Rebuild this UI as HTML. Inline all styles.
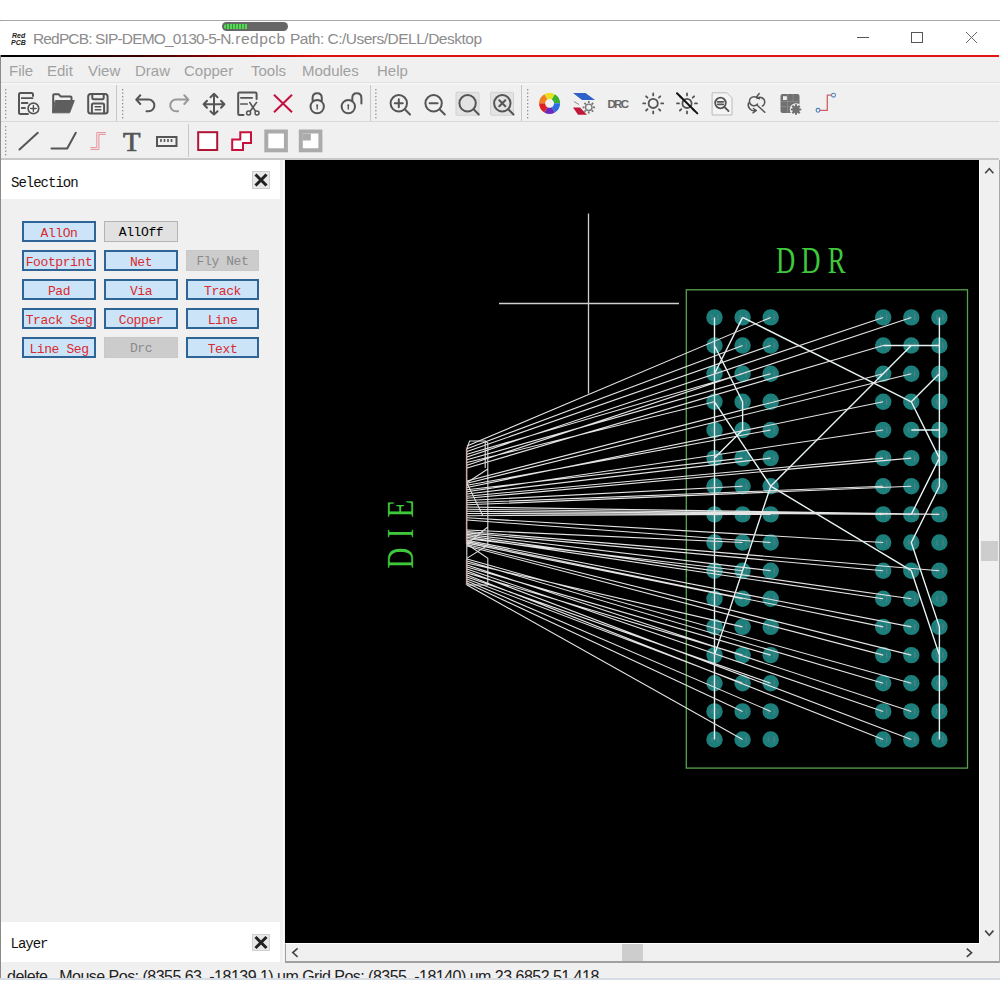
<!DOCTYPE html>
<html><head><meta charset="utf-8">
<style>
*{margin:0;padding:0;box-sizing:border-box}
html,body{width:1000px;height:1000px;overflow:hidden;background:#fff;font-family:"Liberation Sans",sans-serif}
.abs{position:absolute}
#win{position:absolute;left:0;top:20px;width:1000px;height:960px;background:#f0f0f0;border-top:1px solid #a8a8a8;border-left:1px solid #8a8a8a}
#title{position:absolute;left:0;top:21px;width:1000px;height:34px;background:#fff}
#redline{position:absolute;left:1px;top:55px;width:998px;height:2px;background:linear-gradient(to right,#000 0%,#050000 5%,#400000 15%,#a00000 24%,#e01010 32%,#e41414 100%)}
.ttl{position:absolute;left:33px;top:29.5px;font-size:15.5px;color:#8c8c8c;white-space:nowrap;letter-spacing:-0.5px}
.menu{position:absolute;top:62px;font-size:15px;color:#a0a0a0;white-space:nowrap}
.mono{font-family:"Liberation Mono",monospace}
.btn{position:absolute;width:74px;height:21px;border:2px solid #2f6496;background:#cce4f7;color:#da2a30;font-family:"Liberation Mono",monospace;font-size:13px;letter-spacing:-0.4px;text-align:center;line-height:17px;padding-top:1.5px}
.btn.off{border:1px solid #b4b4b4;background:#e1e1e1;color:#000;line-height:19px;padding-top:1px}
.btn.dis{border:1px solid #c8c8c8;background:#cccccc;color:#8a8a8a;line-height:19px;padding-top:1px}
</style></head><body>
<div id="win"></div>
<div id="title"></div>
<div id="redline"></div>
<!-- title -->
<svg class="abs" style="left:11px;top:31px" width="16" height="15" viewBox="0 0 16 15">
<text x="1" y="7" font-family="Liberation Sans" font-weight="bold" font-style="italic" font-size="7" fill="#222">Red</text>
<text x="0" y="14" font-family="Liberation Sans" font-weight="bold" font-style="italic" font-size="7" fill="#222">PCB</text>
</svg>
<div class="ttl" style="letter-spacing:-0.85px">RedPCB: SIP-DEMO_0130-5-N</div><div class="ttl" style="left:230.5px;letter-spacing:0.5px">.redpcb</div><div class="ttl" style="left:290px;letter-spacing:-0.5px">Path: C:/Users/DELL/Desktop</div>
<!-- progress pill -->
<div class="abs" style="left:222px;top:22px;width:66px;height:9px;border-radius:5px;background:#666"></div>
<div class="abs" style="left:224px;top:24px;width:23px;height:5px;border-radius:3px 0 0 3px;background:repeating-linear-gradient(to right,#5ed35e 0 2px,#2f9a2f 2px 3px)"></div>
<!-- window controls -->
<div class="abs" style="left:857px;top:37px;width:12px;height:1px;background:#555"></div>
<div class="abs" style="left:911px;top:32px;width:12px;height:11px;border:1px solid #555"></div>
<svg class="abs" style="left:965px;top:31px" width="13" height="13" viewBox="0 0 13 13"><path d="M1 1L12 12M12 1L1 12" stroke="#666" stroke-width="1"/></svg>
<!-- menu -->
<div class="menu" style="left:9px">File</div>
<div class="menu" style="left:47px">Edit</div>
<div class="menu" style="left:88px">View</div>
<div class="menu" style="left:135px">Draw</div>
<div class="menu" style="left:184px">Copper</div>
<div class="menu" style="left:251px">Tools</div>
<div class="menu" style="left:302px">Modules</div>
<div class="menu" style="left:377px">Help</div>

<!-- toolbars area -->
<!--TB--><svg class="abs" style="left:0;top:80px" width="1000" height="80" viewBox="0 80 1000 80">
<!-- toolbar lines -->
<path d="M1 82.5H1000" stroke="#e2e2e2" stroke-width="1"/><path d="M1 84H1000" stroke="#fafafa" stroke-width="1"/>
<path d="M116.5 85V121M370.5 85V121M521.5 85V121M188.5 124V157" stroke="#c8c8c8" stroke-width="1"/>
<g fill="#8c8c8c">
<rect x="5" y="89" width="1.3" height="1.3"/><rect x="5" y="92.5" width="1.3" height="1.3"/><rect x="5" y="96" width="1.3" height="1.3"/><rect x="5" y="99.5" width="1.3" height="1.3"/><rect x="5" y="103" width="1.3" height="1.3"/><rect x="5" y="106.5" width="1.3" height="1.3"/><rect x="5" y="110" width="1.3" height="1.3"/><rect x="5" y="113.5" width="1.3" height="1.3"/><rect x="5" y="117" width="1.3" height="1.3"/>
</g>

<defs><g id="grip1" fill="#8c8c8c"><rect x="0" y="0" width="1.3" height="1.3"/><rect x="0" y="3.5" width="1.3" height="1.3"/><rect x="0" y="7" width="1.3" height="1.3"/><rect x="0" y="10.5" width="1.3" height="1.3"/><rect x="0" y="14" width="1.3" height="1.3"/><rect x="0" y="17.5" width="1.3" height="1.3"/><rect x="0" y="21" width="1.3" height="1.3"/><rect x="0" y="24.5" width="1.3" height="1.3"/><rect x="0" y="28" width="1.3" height="1.3"/></g></defs>
<use href="#grip1" x="122" y="89"/>
<use href="#grip1" x="375.2" y="89"/>
<use href="#grip1" x="527" y="89"/>
<use href="#grip1" x="5" y="126"/>

<g fill="none" stroke="#555" stroke-width="2" stroke-linecap="round" stroke-linejoin="round">
<!-- new doc -->
<path d="M33 96V94.5Q33 93 31.5 93H20.5Q19 93 19 94.5V112.5Q19 114 20.5 114H28"/>
<path d="M21.8 98.2H32.5M21.8 103H27.5M21.8 108H25" stroke-width="1.8"/>
<circle cx="33.4" cy="108.4" r="5.3" fill="#fff" stroke-width="1.7"/>
<path d="M33.4 105.6V111.2M30.6 108.4H36.2" stroke-width="1.5"/>
<!-- folder -->
<path d="M53.2 111.5V95.3Q53.2 94.3 54.2 94.3H58.8L60.8 96.6H70.5Q71.5 96.6 71.5 97.6V100"/>
<path d="M55.5 100.5H74.3L69.6 112.8H52.8Z" fill="#5e5e5e" stroke="#5e5e5e" stroke-width="1"/>
<!-- save -->
<rect x="88.2" y="94" width="19.4" height="19.4" rx="2.5"/>
<path d="M92.3 94.3V97.8Q92.3 99.3 93.8 99.3H102.2Q103.7 99.3 103.7 97.8V94.3"/>
<path d="M91.9 113V105Q91.9 103.5 93.4 103.5H102.6Q104.1 103.5 104.1 105V113"/>
<path d="M95.2 106.8H100.8M95.2 109.8H100.8" stroke-width="1.4"/>
<!-- undo -->
<path d="M140.3 95.2L136.2 99.6L140.3 104M136.5 99.6H148.5A5.8 5.8 0 0 1 148.5 111.3H146.5"/>
<!-- redo -->
<path d="M184.3 95.2L188.4 99.6L184.3 104M188.1 99.6H176.1A5.8 5.8 0 0 0 176.1 111.3H178.1" stroke="#999"/>
<!-- move -->
<path d="M214 93.8V114.6M203.6 104.2H224.4M210.5 97.2L214 93.8L217.5 97.2M210.5 111.2L214 114.6L217.5 111.2M207 100.7L203.6 104.2L207 107.7M221 100.7L224.4 104.2L221 107.7"/>
<!-- doc scissors -->
<path d="M243.5 115H239.4Q238.2 115 238.2 113.8V93.8Q238.2 92.6 239.4 92.6H255.4Q256.6 92.6 256.6 93.8V99"/>
<path d="M240.8 97.8H252.2M240.8 104H247.2" stroke-width="1.7"/>
<path d="M249.8 102.5L255.5 111.3M256.5 102.5L250.2 111.3" stroke-width="1.6"/>
<circle cx="248.6" cy="113" r="2" stroke-width="1.5"/><circle cx="257" cy="113" r="2" stroke-width="1.5"/>
<!-- red X -->
<path d="M274 94.7L292 112.2M292 94.7L274 112.2" stroke="#c5103f" stroke-width="2" stroke-linecap="butt"/>
<!-- lock closed -->
<path d="M312.6 100.5V98Q312.6 93.2 317.2 93.2Q321.8 93.2 321.8 98V100.5"/>
<circle cx="317.2" cy="106.6" r="6.7"/>
<path d="M317.2 105.6V109" stroke-width="1.4"/><circle cx="317.2" cy="105.2" r="1" fill="#555" stroke="none"/>
<!-- lock open -->
<path d="M352.3 100.8V98Q352.3 93.2 356.8 93.2Q361.4 93.2 361.4 98V103.6"/>
<circle cx="348.3" cy="106.6" r="6.7"/>
<path d="M348.3 105.6V109" stroke-width="1.4"/><circle cx="348.3" cy="105.2" r="1" fill="#555" stroke="none"/>
<!-- zoom in/out/fit/x -->
<rect x="456" y="92.3" width="23" height="23" fill="#e3e3e3" stroke="#d2d2d2" stroke-width="1" rx="1"/>
<rect x="490.5" y="92.3" width="23" height="23" fill="#e3e3e3" stroke="#d2d2d2" stroke-width="1" rx="1"/>
<circle cx="398.8" cy="103.3" r="8.2"/><path d="M404.8 109.3L410 114.5M398.8 99.3V107.3M394.8 103.3H402.8"/>
<circle cx="433.6" cy="103.3" r="8.2"/><path d="M439.6 109.3L444.8 114.5M429.6 103.3H437.6"/>
<circle cx="467.6" cy="103.3" r="8.2"/><path d="M473.6 109.3L478.8 114.5"/>
<circle cx="502.3" cy="103.3" r="8.2"/><path d="M508.3 109.3L513.5 114.5M499.3 100.3L505.3 106.3M505.3 100.3L499.3 106.3"/>
</g>
<!-- color wheel -->
<g transform="translate(549.6,103.3) rotate(-30)">
<path d="M0 -10.5A10.5 10.5 0 0 1 9.09 -5.25L3.9 -2.25A4.5 4.5 0 0 0 0 -4.5Z" fill="#e8e020"/>
<path d="M9.09 -5.25A10.5 10.5 0 0 1 9.09 5.25L3.9 2.25A4.5 4.5 0 0 0 3.9 -2.25Z" fill="#38b030"/>
<path d="M9.09 5.25A10.5 10.5 0 0 1 0 10.5L0 4.5A4.5 4.5 0 0 0 3.9 2.25Z" fill="#2a6de0"/>
<path d="M0 10.5A10.5 10.5 0 0 1 -9.09 5.25L-3.9 2.25A4.5 4.5 0 0 0 0 4.5Z" fill="#6a2ac0"/>
<path d="M-9.09 5.25A10.5 10.5 0 0 1 -9.09 -5.25L-3.9 -2.25A4.5 4.5 0 0 0 -3.9 2.25Z" fill="#e02020"/>
<path d="M-9.09 -5.25A10.5 10.5 0 0 1 0 -10.5L0 -4.5A4.5 4.5 0 0 0 -3.9 -2.25Z" fill="#f08020"/>
</g>
<!-- layer settings -->
<path d="M573 93H585.5L595 100H582Z" fill="#2f62c8"/>
<path d="M574 101.5L579 104.5" stroke="#888" stroke-width="1"/>
<path d="M573 107.5H580L587 114.8H578Z" fill="#c01838"/>
<g transform="translate(588.8,107.3)" fill="none" stroke="#777" stroke-width="1.4">
<circle r="3.2"/><path d="M0 -6.2V-4.2M0 4.2V6.2M-6.2 0H-4.2M4.2 0H6.2M-4.4 -4.4L-3 -3M3 3L4.4 4.4M-4.4 4.4L-3 3M3 -3L4.4 -4.4" stroke-width="1.8"/>
</g>
<text x="607.5" y="107.8" font-family="Liberation Sans" font-weight="bold" font-size="11.5" fill="#666" textLength="21.5">DRC</text>
<!-- sun -->
<g fill="none" stroke="#555" stroke-width="1.8" stroke-linecap="round">
<g transform="translate(653.2,103.4)"><circle r="4.6"/><path d="M0 -10V-8M0 8V10M-10 0H-8M8 0H10M-7.1 -7.1L-5.7 -5.7M5.7 5.7L7.1 7.1M-7.1 7.1L-5.7 5.7M5.7 -5.7L7.1 -7.1"/></g>
<g transform="translate(687,103.4)"><circle r="4.6"/><path d="M0 -10V-8M0 8V10M-10 0H-8M8 0H10M-7.1 -7.1L-5.7 -5.7M5.7 5.7L7.1 7.1M-7.1 7.1L-5.7 5.7M5.7 -5.7L7.1 -7.1"/></g>
<path d="M677 93.2L697.3 113.4" stroke="#111" stroke-width="2"/>
<!-- doc magnifier -->
<path d="M712.5 92.8H727L732 97.8V115H712.5Z" fill="#f4f4f4" stroke="#bbb" stroke-width="1"/>
<circle cx="720.5" cy="103" r="5.3" stroke-width="1.8"/>
<path d="M724.3 106.8L728.5 111M717.8 101.8H723.2M717.8 104.3H723.2" stroke-width="1.8"/>
<!-- circular arrows -->
<g stroke-width="1.5" stroke="#555" fill="none">
<path d="M757.3 98.2A4.5 4.5 0 1 0 757.5 104"/>
<path d="M757.5 98A4.5 4.5 0 1 1 762.5 106"/>
<path d="M759.2 93.5L756.6 96.8L759.6 98.8"/>
<path d="M748.5 103A6 6 0 0 0 756 110.5"/>
<path d="M753.5 108.5L756 110.5L753 112.8"/>
<path d="M757.5 105.5L764.8 112.3"/>
</g>
</g>
<!-- puzzle gear -->
<rect x="780.5" y="94" width="19" height="19" rx="2" fill="#707070"/>
<path d="M781 101.5H800M781 106.5H791M787.5 94V113M793 94V101" stroke="#8c8c8c" stroke-width="0.8"/><rect x="783" y="96.2" width="3.8" height="3.8" fill="#eee"/>
<g transform="translate(796,109.5)"><circle r="6.3" fill="#f4f4f4"/><circle r="3.6" fill="#707070"/><path d="M0 -5.3V5.3M-5.3 0H5.3M-3.7 -3.7L3.7 3.7M-3.7 3.7L3.7 -3.7" stroke="#707070" stroke-width="2.2"/></g>
<!-- step line -->
<path d="M819.5 110.3H827.3V95.2H831.6" fill="none" stroke="#d06060" stroke-width="1.3"/>
<circle cx="818" cy="110.3" r="1.9" fill="#fff" stroke="#4a7ab8" stroke-width="1.1"/>
<circle cx="833.5" cy="95.2" r="1.9" fill="#fff" stroke="#4a7ab8" stroke-width="1.1"/>

<!-- toolbar 2 -->
<g fill="none" stroke="#555" stroke-width="2" stroke-linecap="round" stroke-linejoin="round">
<path d="M19.5 149.5L37.8 132.8"/>
<path d="M51.5 148.5H67.2L75.8 132.8"/>
</g>
<path d="M90.5 147.6H96.8V132.6H105.8M90.5 149.4H98.9V134.4H105.8" fill="none" stroke="#e6909a" stroke-width="1"/>
<text x="123" y="150.5" font-family="Liberation Serif" font-size="27" fill="#555" stroke="#555" stroke-width="0.7" textLength="17.5" lengthAdjust="spacingAndGlyphs">T</text>
<rect x="157" y="137" width="19.5" height="9" fill="none" stroke="#555" stroke-width="2"/>
<path d="M161 139V142M164.5 139V142M168 139V142M171.5 139V142" stroke="#555" stroke-width="1.6"/>
<rect x="198.2" y="132.2" width="19" height="17.8" fill="#fff" stroke="#b01535" stroke-width="2"/>
<path d="M232.2 139.5H240.3V132.3H251V143H243V150H232.2Z" fill="#fff" stroke="#c8103c" stroke-width="2"/>
<rect x="266.3" y="131.5" width="19.6" height="18.8" fill="#fff" stroke="#ababab" stroke-width="4"/>
<rect x="300.8" y="131.5" width="19.6" height="18.8" fill="#fff" stroke="#ababab" stroke-width="4"/>
<rect x="302.8" y="133.5" width="8" height="7" fill="#ababab"/>
</svg>
<!--/TB-->
<div class="abs" style="left:1px;top:121px;width:998px;height:1px;background:#d8d8d8"></div>
<div class="abs" style="left:1px;top:158px;width:998px;height:2px;background:#c8c8c8"></div>

<!-- left dock -->
<div class="abs" style="left:1px;top:160px;width:279px;height:39px;background:#fff"></div>
<div class="abs mono" style="left:11px;top:174.5px;font-size:14px;letter-spacing:-1px;color:#111">Selection</div>
<div class="abs" style="left:252px;top:171px;width:18px;height:18px;background:#e8e8e8;border:1px solid #cfcfcf"></div>
<svg class="abs" style="left:252px;top:171px" width="18" height="18" viewBox="0 0 18 18"><path d="M3.5 3.5L14.5 14.5M14.5 3.5L3.5 14.5" stroke="#222" stroke-width="3"/></svg>

<div class="btn" style="left:22px;top:221px">AllOn</div>
<div class="btn off" style="left:104px;top:221px">AllOff</div>
<div class="btn" style="left:22px;top:250px">Footprint</div>
<div class="btn" style="left:104px;top:250px">Net</div>
<div class="btn dis" style="left:186px;top:250px;width:73px">Fly Net</div>
<div class="btn" style="left:22px;top:279px">Pad</div>
<div class="btn" style="left:104px;top:279px">Via</div>
<div class="btn" style="left:186px;top:279px;width:73px">Track</div>
<div class="btn" style="left:22px;top:308px">Track Seg</div>
<div class="btn" style="left:104px;top:308px">Copper</div>
<div class="btn" style="left:186px;top:308px;width:73px">Line</div>
<div class="btn" style="left:22px;top:337px">Line Seg</div>
<div class="btn dis" style="left:104px;top:337px">Drc</div>
<div class="btn" style="left:186px;top:337px;width:73px">Text</div>

<div class="abs" style="left:1px;top:922px;width:279px;height:40px;background:#fff"></div>
<div class="abs mono" style="left:10.5px;top:936px;font-size:14px;letter-spacing:-1px;color:#111">Layer</div>
<div class="abs" style="left:252px;top:934px;width:18px;height:17px;background:#e8e8e8;border:1px solid #cfcfcf"></div>
<svg class="abs" style="left:252px;top:934px" width="18" height="17" viewBox="0 0 18 17"><path d="M3.5 3L14.5 14M14.5 3L3.5 14" stroke="#222" stroke-width="3"/></svg>

<!-- canvas -->
<div class="abs" style="left:283px;top:160px;width:1px;height:802px;background:#fbfbfb"></div>
<div class="abs" style="left:285px;top:160px;width:694px;height:783px;background:#000"></div>
<svg id="pcb" class="abs" style="left:285px;top:160px" width="694" height="783" viewBox="285 160 694 783"><!--PCB--><path d="M588.5 213.5V393.5M499 303.5H679" stroke="#cfcfcf" stroke-width="1.3" fill="none"/>
<rect x="686.3" y="289.8" width="281.2" height="478.3" fill="none" stroke="#55a34c" stroke-width="1.3"/>
<g fill="#1d7f7c"><circle cx="714.5" cy="317.4" r="8.2"/><circle cx="714.5" cy="345.5" r="8.2"/><circle cx="714.5" cy="373.7" r="8.2"/><circle cx="714.5" cy="401.8" r="8.2"/><circle cx="714.5" cy="430.0" r="8.2"/><circle cx="714.5" cy="458.1" r="8.2"/><circle cx="714.5" cy="486.2" r="8.2"/><circle cx="714.5" cy="514.4" r="8.2"/><circle cx="714.5" cy="542.5" r="8.2"/><circle cx="714.5" cy="570.7" r="8.2"/><circle cx="714.5" cy="598.8" r="8.2"/><circle cx="714.5" cy="626.9" r="8.2"/><circle cx="714.5" cy="655.1" r="8.2"/><circle cx="714.5" cy="683.2" r="8.2"/><circle cx="714.5" cy="711.4" r="8.2"/><circle cx="714.5" cy="739.5" r="8.2"/><circle cx="742.6" cy="317.4" r="8.2"/><circle cx="742.6" cy="345.5" r="8.2"/><circle cx="742.6" cy="373.7" r="8.2"/><circle cx="742.6" cy="401.8" r="8.2"/><circle cx="742.6" cy="430.0" r="8.2"/><circle cx="742.6" cy="458.1" r="8.2"/><circle cx="742.6" cy="486.2" r="8.2"/><circle cx="742.6" cy="514.4" r="8.2"/><circle cx="742.6" cy="542.5" r="8.2"/><circle cx="742.6" cy="570.7" r="8.2"/><circle cx="742.6" cy="598.8" r="8.2"/><circle cx="742.6" cy="626.9" r="8.2"/><circle cx="742.6" cy="655.1" r="8.2"/><circle cx="742.6" cy="683.2" r="8.2"/><circle cx="742.6" cy="711.4" r="8.2"/><circle cx="742.6" cy="739.5" r="8.2"/><circle cx="770.7" cy="317.4" r="8.2"/><circle cx="770.7" cy="345.5" r="8.2"/><circle cx="770.7" cy="373.7" r="8.2"/><circle cx="770.7" cy="401.8" r="8.2"/><circle cx="770.7" cy="430.0" r="8.2"/><circle cx="770.7" cy="458.1" r="8.2"/><circle cx="770.7" cy="486.2" r="8.2"/><circle cx="770.7" cy="514.4" r="8.2"/><circle cx="770.7" cy="542.5" r="8.2"/><circle cx="770.7" cy="570.7" r="8.2"/><circle cx="770.7" cy="598.8" r="8.2"/><circle cx="770.7" cy="626.9" r="8.2"/><circle cx="770.7" cy="655.1" r="8.2"/><circle cx="770.7" cy="683.2" r="8.2"/><circle cx="770.7" cy="711.4" r="8.2"/><circle cx="770.7" cy="739.5" r="8.2"/><circle cx="883.2" cy="317.4" r="8.2"/><circle cx="883.2" cy="345.5" r="8.2"/><circle cx="883.2" cy="373.7" r="8.2"/><circle cx="883.2" cy="401.8" r="8.2"/><circle cx="883.2" cy="430.0" r="8.2"/><circle cx="883.2" cy="458.1" r="8.2"/><circle cx="883.2" cy="486.2" r="8.2"/><circle cx="883.2" cy="514.4" r="8.2"/><circle cx="883.2" cy="542.5" r="8.2"/><circle cx="883.2" cy="570.7" r="8.2"/><circle cx="883.2" cy="598.8" r="8.2"/><circle cx="883.2" cy="626.9" r="8.2"/><circle cx="883.2" cy="655.1" r="8.2"/><circle cx="883.2" cy="683.2" r="8.2"/><circle cx="883.2" cy="711.4" r="8.2"/><circle cx="883.2" cy="739.5" r="8.2"/><circle cx="911.3" cy="317.4" r="8.2"/><circle cx="911.3" cy="345.5" r="8.2"/><circle cx="911.3" cy="373.7" r="8.2"/><circle cx="911.3" cy="401.8" r="8.2"/><circle cx="911.3" cy="430.0" r="8.2"/><circle cx="911.3" cy="458.1" r="8.2"/><circle cx="911.3" cy="486.2" r="8.2"/><circle cx="911.3" cy="514.4" r="8.2"/><circle cx="911.3" cy="542.5" r="8.2"/><circle cx="911.3" cy="570.7" r="8.2"/><circle cx="911.3" cy="598.8" r="8.2"/><circle cx="911.3" cy="626.9" r="8.2"/><circle cx="911.3" cy="655.1" r="8.2"/><circle cx="911.3" cy="683.2" r="8.2"/><circle cx="911.3" cy="711.4" r="8.2"/><circle cx="911.3" cy="739.5" r="8.2"/><circle cx="939.4" cy="317.4" r="8.2"/><circle cx="939.4" cy="345.5" r="8.2"/><circle cx="939.4" cy="373.7" r="8.2"/><circle cx="939.4" cy="401.8" r="8.2"/><circle cx="939.4" cy="430.0" r="8.2"/><circle cx="939.4" cy="458.1" r="8.2"/><circle cx="939.4" cy="486.2" r="8.2"/><circle cx="939.4" cy="514.4" r="8.2"/><circle cx="939.4" cy="542.5" r="8.2"/><circle cx="939.4" cy="570.7" r="8.2"/><circle cx="939.4" cy="598.8" r="8.2"/><circle cx="939.4" cy="626.9" r="8.2"/><circle cx="939.4" cy="655.1" r="8.2"/><circle cx="939.4" cy="683.2" r="8.2"/><circle cx="939.4" cy="711.4" r="8.2"/><circle cx="939.4" cy="739.5" r="8.2"/></g>
<path d="M712.0 314.9v5M718.0 314.4v6M712.0 343.0v5M718.0 342.5v6M712.0 371.2v5M718.0 370.7v6M712.0 399.3v5M718.0 398.8v6M712.0 427.5v5M718.0 427.0v6M712.0 455.6v5M718.0 455.1v6M712.0 483.7v5M718.0 483.2v6M712.0 511.9v5M718.0 511.4v6M712.0 540.0v5M718.0 539.5v6M712.0 568.2v5M718.0 567.7v6M712.0 596.3v5M718.0 595.8v6M712.0 624.4v5M718.0 623.9v6M712.0 652.6v5M718.0 652.1v6M712.0 680.7v5M718.0 680.2v6M712.0 708.9v5M718.0 708.4v6M712.0 737.0v5M718.0 736.5v6M740.1 314.9v5M746.1 314.4v6M740.1 343.0v5M746.1 342.5v6M740.1 371.2v5M746.1 370.7v6M740.1 399.3v5M746.1 398.8v6M740.1 427.5v5M746.1 427.0v6M740.1 455.6v5M746.1 455.1v6M740.1 483.7v5M746.1 483.2v6M740.1 511.9v5M746.1 511.4v6M740.1 540.0v5M746.1 539.5v6M740.1 568.2v5M746.1 567.7v6M740.1 596.3v5M746.1 595.8v6M740.1 624.4v5M746.1 623.9v6M740.1 652.6v5M746.1 652.1v6M740.1 680.7v5M746.1 680.2v6M740.1 708.9v5M746.1 708.4v6M740.1 737.0v5M746.1 736.5v6M768.2 314.9v5M774.2 314.4v6M768.2 343.0v5M774.2 342.5v6M768.2 371.2v5M774.2 370.7v6M768.2 399.3v5M774.2 398.8v6M768.2 427.5v5M774.2 427.0v6M768.2 455.6v5M774.2 455.1v6M768.2 483.7v5M774.2 483.2v6M768.2 511.9v5M774.2 511.4v6M768.2 540.0v5M774.2 539.5v6M768.2 568.2v5M774.2 567.7v6M768.2 596.3v5M774.2 595.8v6M768.2 624.4v5M774.2 623.9v6M768.2 652.6v5M774.2 652.1v6M768.2 680.7v5M774.2 680.2v6M768.2 708.9v5M774.2 708.4v6M768.2 737.0v5M774.2 736.5v6M880.7 314.9v5M886.7 314.4v6M880.7 343.0v5M886.7 342.5v6M880.7 371.2v5M886.7 370.7v6M880.7 399.3v5M886.7 398.8v6M880.7 427.5v5M886.7 427.0v6M880.7 455.6v5M886.7 455.1v6M880.7 483.7v5M886.7 483.2v6M880.7 511.9v5M886.7 511.4v6M880.7 540.0v5M886.7 539.5v6M880.7 568.2v5M886.7 567.7v6M880.7 596.3v5M886.7 595.8v6M880.7 624.4v5M886.7 623.9v6M880.7 652.6v5M886.7 652.1v6M880.7 680.7v5M886.7 680.2v6M880.7 708.9v5M886.7 708.4v6M880.7 737.0v5M886.7 736.5v6M908.8 314.9v5M914.8 314.4v6M908.8 343.0v5M914.8 342.5v6M908.8 371.2v5M914.8 370.7v6M908.8 399.3v5M914.8 398.8v6M908.8 427.5v5M914.8 427.0v6M908.8 455.6v5M914.8 455.1v6M908.8 483.7v5M914.8 483.2v6M908.8 511.9v5M914.8 511.4v6M908.8 540.0v5M914.8 539.5v6M908.8 568.2v5M914.8 567.7v6M908.8 596.3v5M914.8 595.8v6M908.8 624.4v5M914.8 623.9v6M908.8 652.6v5M914.8 652.1v6M908.8 680.7v5M914.8 680.2v6M908.8 708.9v5M914.8 708.4v6M908.8 737.0v5M914.8 736.5v6M936.9 314.9v5M942.9 314.4v6M936.9 343.0v5M942.9 342.5v6M936.9 371.2v5M942.9 370.7v6M936.9 399.3v5M942.9 398.8v6M936.9 427.5v5M942.9 427.0v6M936.9 455.6v5M942.9 455.1v6M936.9 483.7v5M942.9 483.2v6M936.9 511.9v5M942.9 511.4v6M936.9 540.0v5M942.9 539.5v6M936.9 568.2v5M942.9 567.7v6M936.9 596.3v5M942.9 595.8v6M936.9 624.4v5M942.9 623.9v6M936.9 652.6v5M942.9 652.1v6M936.9 680.7v5M942.9 680.2v6M936.9 708.9v5M942.9 708.4v6M936.9 737.0v5M942.9 736.5v6" stroke="#6a7c86" stroke-width="0.9" fill="none"/>
<path d="M714.5 317.4L714.5 739.5M939.4 317.4L939.4 486.2L911.3 542.5L939.4 626.9L939.4 739.5M911.3 570.7L939.4 655.1M911.3 401.8L939.4 458.1L911.3 514.4M911.3 401.8L939.4 373.7M742.6 317.4L911.3 401.8M742.6 317.4L714.5 373.7M883.2 345.5L939.4 345.5M911.3 430.0L939.4 430.0M714.5 345.5L742.6 401.8L742.6 430.0L714.5 458.1M714.5 401.8L770.7 486.2M770.7 486.2L911.3 345.5M770.7 486.2L911.3 570.7M770.7 486.2L714.5 655.1" stroke="#e8f4f4" stroke-width="1.4" fill="none" stroke-linejoin="round"/>
<path d="M467.0 446.0L770.7 317.4M467.0 448.8L742.6 345.5M467.0 451.5L770.7 345.5M467.0 454.2L742.6 373.7M467.0 457.0L883.2 317.4M467.0 459.8L770.7 373.7M467.0 462.5L714.5 401.8M467.0 465.2L911.3 317.4M467.0 468.0L883.2 345.5M467.0 481.0L883.2 373.7M467.0 483.2L911.3 373.7M467.0 485.3L770.7 430.0M467.0 487.5L883.2 401.8M467.0 489.7L742.6 458.1M467.0 491.8L883.2 430.0M467.0 494.0L770.7 458.1M467.0 496.2L883.2 458.1M467.0 498.3L911.3 458.1M467.0 500.5L742.6 486.2M467.0 502.7L883.2 486.2M467.0 504.8L911.3 486.2M467.0 507.0L939.4 514.4M467.0 509.2L911.3 514.4M467.0 511.3L883.2 514.4M467.0 513.5L770.7 514.4M467.0 515.7L742.6 514.4M467.0 517.8L883.2 542.5M467.0 520.0L770.7 542.5M467.0 530.0L742.6 542.5M467.0 531.5L939.4 570.7M467.0 532.9L883.2 570.7M467.0 534.4L770.7 570.7M467.0 535.8L911.3 598.8M467.0 537.3L883.2 598.8M467.0 538.7L742.6 570.7M467.0 540.2L911.3 626.9M467.0 541.6L883.2 626.9M467.0 543.1L742.6 598.8M467.0 544.5L911.3 655.1M467.0 546.0L883.2 655.1M467.0 559.0L911.3 683.2M467.0 561.0L883.2 683.2M467.0 563.0L742.6 626.9M467.0 565.0L911.3 711.4M467.0 567.0L770.7 655.1M467.0 569.0L883.2 711.4M467.0 571.0L911.3 739.5M467.0 573.0L742.6 655.1M467.0 575.0L883.2 739.5M467.0 577.0L770.7 683.2M467.0 579.0L742.6 683.2M467.0 581.0L770.7 711.4M467.0 583.0L742.6 711.4M467.0 585.0L742.6 739.5" stroke="#e4e4e4" stroke-width="1.1" fill="none"/>
<path d="M466.2 447V544M466.2 559V585" stroke="#a03030" stroke-width="1" fill="none"/>
<path d="M466.8 585V449L469.6 441H485.6L487.8 443V545.2L466.8 558.4M466.8 544L487.8 558.4V585H466.8M466.8 544L487.8 527M466.8 482.7L487.8 469M466.8 482.7L483 516M485.2 441V468" stroke="#dcdcdc" stroke-width="1.1" fill="none"/>
<g font-family="Liberation Serif" font-size="37" fill="#40c83c"><text x="1091.0" y="273.5" text-anchor="middle" transform="scale(0.72,1)">D</text><text x="1126.1" y="273.5" text-anchor="middle" transform="scale(0.72,1)">D</text><text x="1162.1" y="273.5" text-anchor="middle" transform="scale(0.72,1)">R</text></g>
<g transform="translate(412.5,567) rotate(-90)" font-family="Liberation Serif" font-size="37" fill="#40c83c"><text x="11.5" y="0" text-anchor="middle" transform="scale(0.78,1)">D</text><text x="43.1" y="0" text-anchor="middle" transform="scale(0.78,1)">I</text><text x="74.7" y="0" text-anchor="middle" transform="scale(0.78,1)">E</text></g>
<!--/PCB--></svg>

<!-- scrollbars -->
<div class="abs" style="left:979px;top:160px;width:21px;height:803px;background:#f0f0f0;border-left:1px solid #fff;border-right:1px solid #a8a8a8"></div>
<div class="abs" style="left:285px;top:943px;width:694px;height:19px;background:#f0f0f0;border-left:1px solid #a0a0a0;border-top:1px solid #fff"></div>
<div class="abs" style="left:979px;top:943px;width:20px;height:19px;background:#f0f0f0"></div>
<div class="abs" style="left:285px;top:961px;width:714px;height:2px;background:#a0a0a0"></div>
<div class="abs" style="left:981px;top:541px;width:17px;height:20px;background:#cdcdcd"></div>
<div class="abs" style="left:622px;top:944px;width:21px;height:17px;background:#cdcdcd"></div>
<svg class="abs" style="left:280px;top:160px" width="720" height="803" viewBox="280 160 720 803">
<path d="M985.2 173.3L989.3 168.6L993.4 173.3M985.2 930.6L989.3 935.3L993.4 930.6M966.8 948.6L971.6 952.7L966.8 956.8M297.6 948.4L292.8 952.6L297.6 956.8" fill="none" stroke="#444" stroke-width="1.6"/>
</svg>

<!-- status -->
<div class="abs" style="left:1px;top:963px;width:998px;height:15.5px;background:#f0f0f0;overflow:hidden">
<div class="abs" style="left:6px;top:4.5px;font-size:16px;letter-spacing:-0.52px;color:#222;white-space:nowrap">delete&nbsp;&nbsp; Mouse Pos: (8355.63, -18139.1) um Grid Pos: (8355, -18140) um 23.6852,51.418</div>
</div>
<div class="abs" style="left:0;top:978px;width:1000px;height:2px;background:#d6dde4"></div>
<div class="abs" style="left:0;top:980px;width:1000px;height:20px;background:#fff"></div>
</body></html>
